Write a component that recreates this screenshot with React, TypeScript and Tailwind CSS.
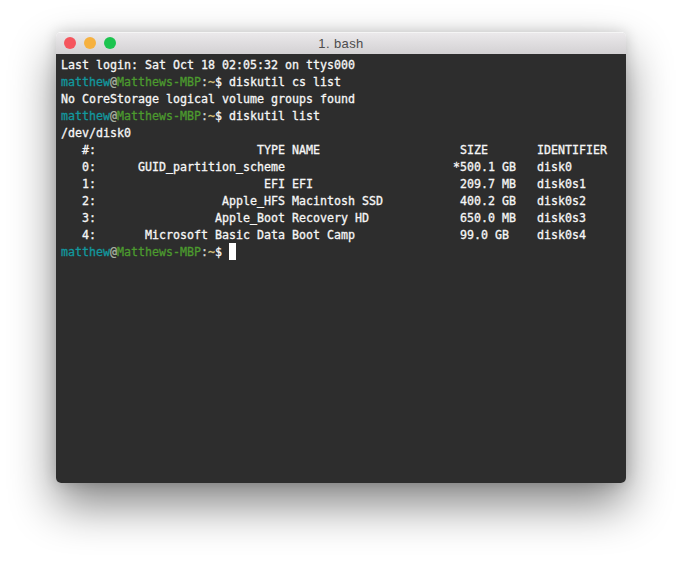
const Prompt = () => (
  <>
    <span className="text-[#12989e]">matthew</span>
    <span className="text-[#a8b0a0]">@</span>
    <span className="text-[#4c9a2e]">Matthews-MBP</span>
    <span className="text-[#d8d8d8]">:</span>
    <span className="text-[#d9c27c]">~</span>
    <span>$ </span>
  </>
);

const table = [
  "   #:                       TYPE NAME                    SIZE       IDENTIFIER",
  "   0:      GUID_partition_scheme                        *500.1 GB   disk0",
  "   1:                        EFI EFI                     209.7 MB   disk0s1",
  "   2:                  Apple_HFS Macintosh SSD           400.2 GB   disk0s2",
  "   3:                 Apple_Boot Recovery HD             650.0 MB   disk0s3",
  "   4:       Microsoft Basic Data Boot Camp               99.0 GB    disk0s4",
];

export default function App() {
  return (
    <main className="min-h-[563px] bg-white pl-[56px] pt-[32px] overflow-hidden">
      <div className="w-[570px] h-[451px] rounded-[5px] overflow-hidden flex flex-col shadow-[0_22px_46px_rgba(0,0,0,0.48),0_0_14px_rgba(0,0,0,0.16)]">
        <div className="relative h-[22px] shrink-0 flex items-center justify-center bg-gradient-to-b from-[#ebe9eb] to-[#d3d1d3] border-t border-[#f5f5f5]">
          <div className="absolute left-[8px] top-[4px] flex gap-[8px]">
            <span className="w-[12px] h-[12px] rounded-full bg-[#f5555d]" />
            <span className="w-[12px] h-[12px] rounded-full bg-[#f6b13f]" />
            <span className="w-[12px] h-[12px] rounded-full bg-[#1cc44f]" />
          </div>
          <span className="text-[13px] tracking-[0.4px] text-[#4c4c4c] font-['Liberation_Sans',sans-serif]">1. bash</span>
        </div>
        <div className="flex-1 bg-[#2d2d2d] pl-[5px] pt-[3px] text-[#f6f6f6] text-[11.63px] leading-[17px] font-['DejaVu_Sans_Mono',monospace] whitespace-pre [-webkit-text-stroke:0.3px]">
          <div>Last login: Sat Oct 18 02:05:32 on ttys000</div>
          <div><Prompt />diskutil cs list</div>
          <div>No CoreStorage logical volume groups found</div>
          <div><Prompt />diskutil list</div>
          <div>/dev/disk0</div>
          {table.map((row) => (
            <div key={row}>{row}</div>
          ))}
          <div className="flex">
            <span><Prompt /></span>
            <span className="w-[7px] h-[17px] -mt-px bg-white" />
          </div>
        </div>
      </div>
    </main>
  );
}
